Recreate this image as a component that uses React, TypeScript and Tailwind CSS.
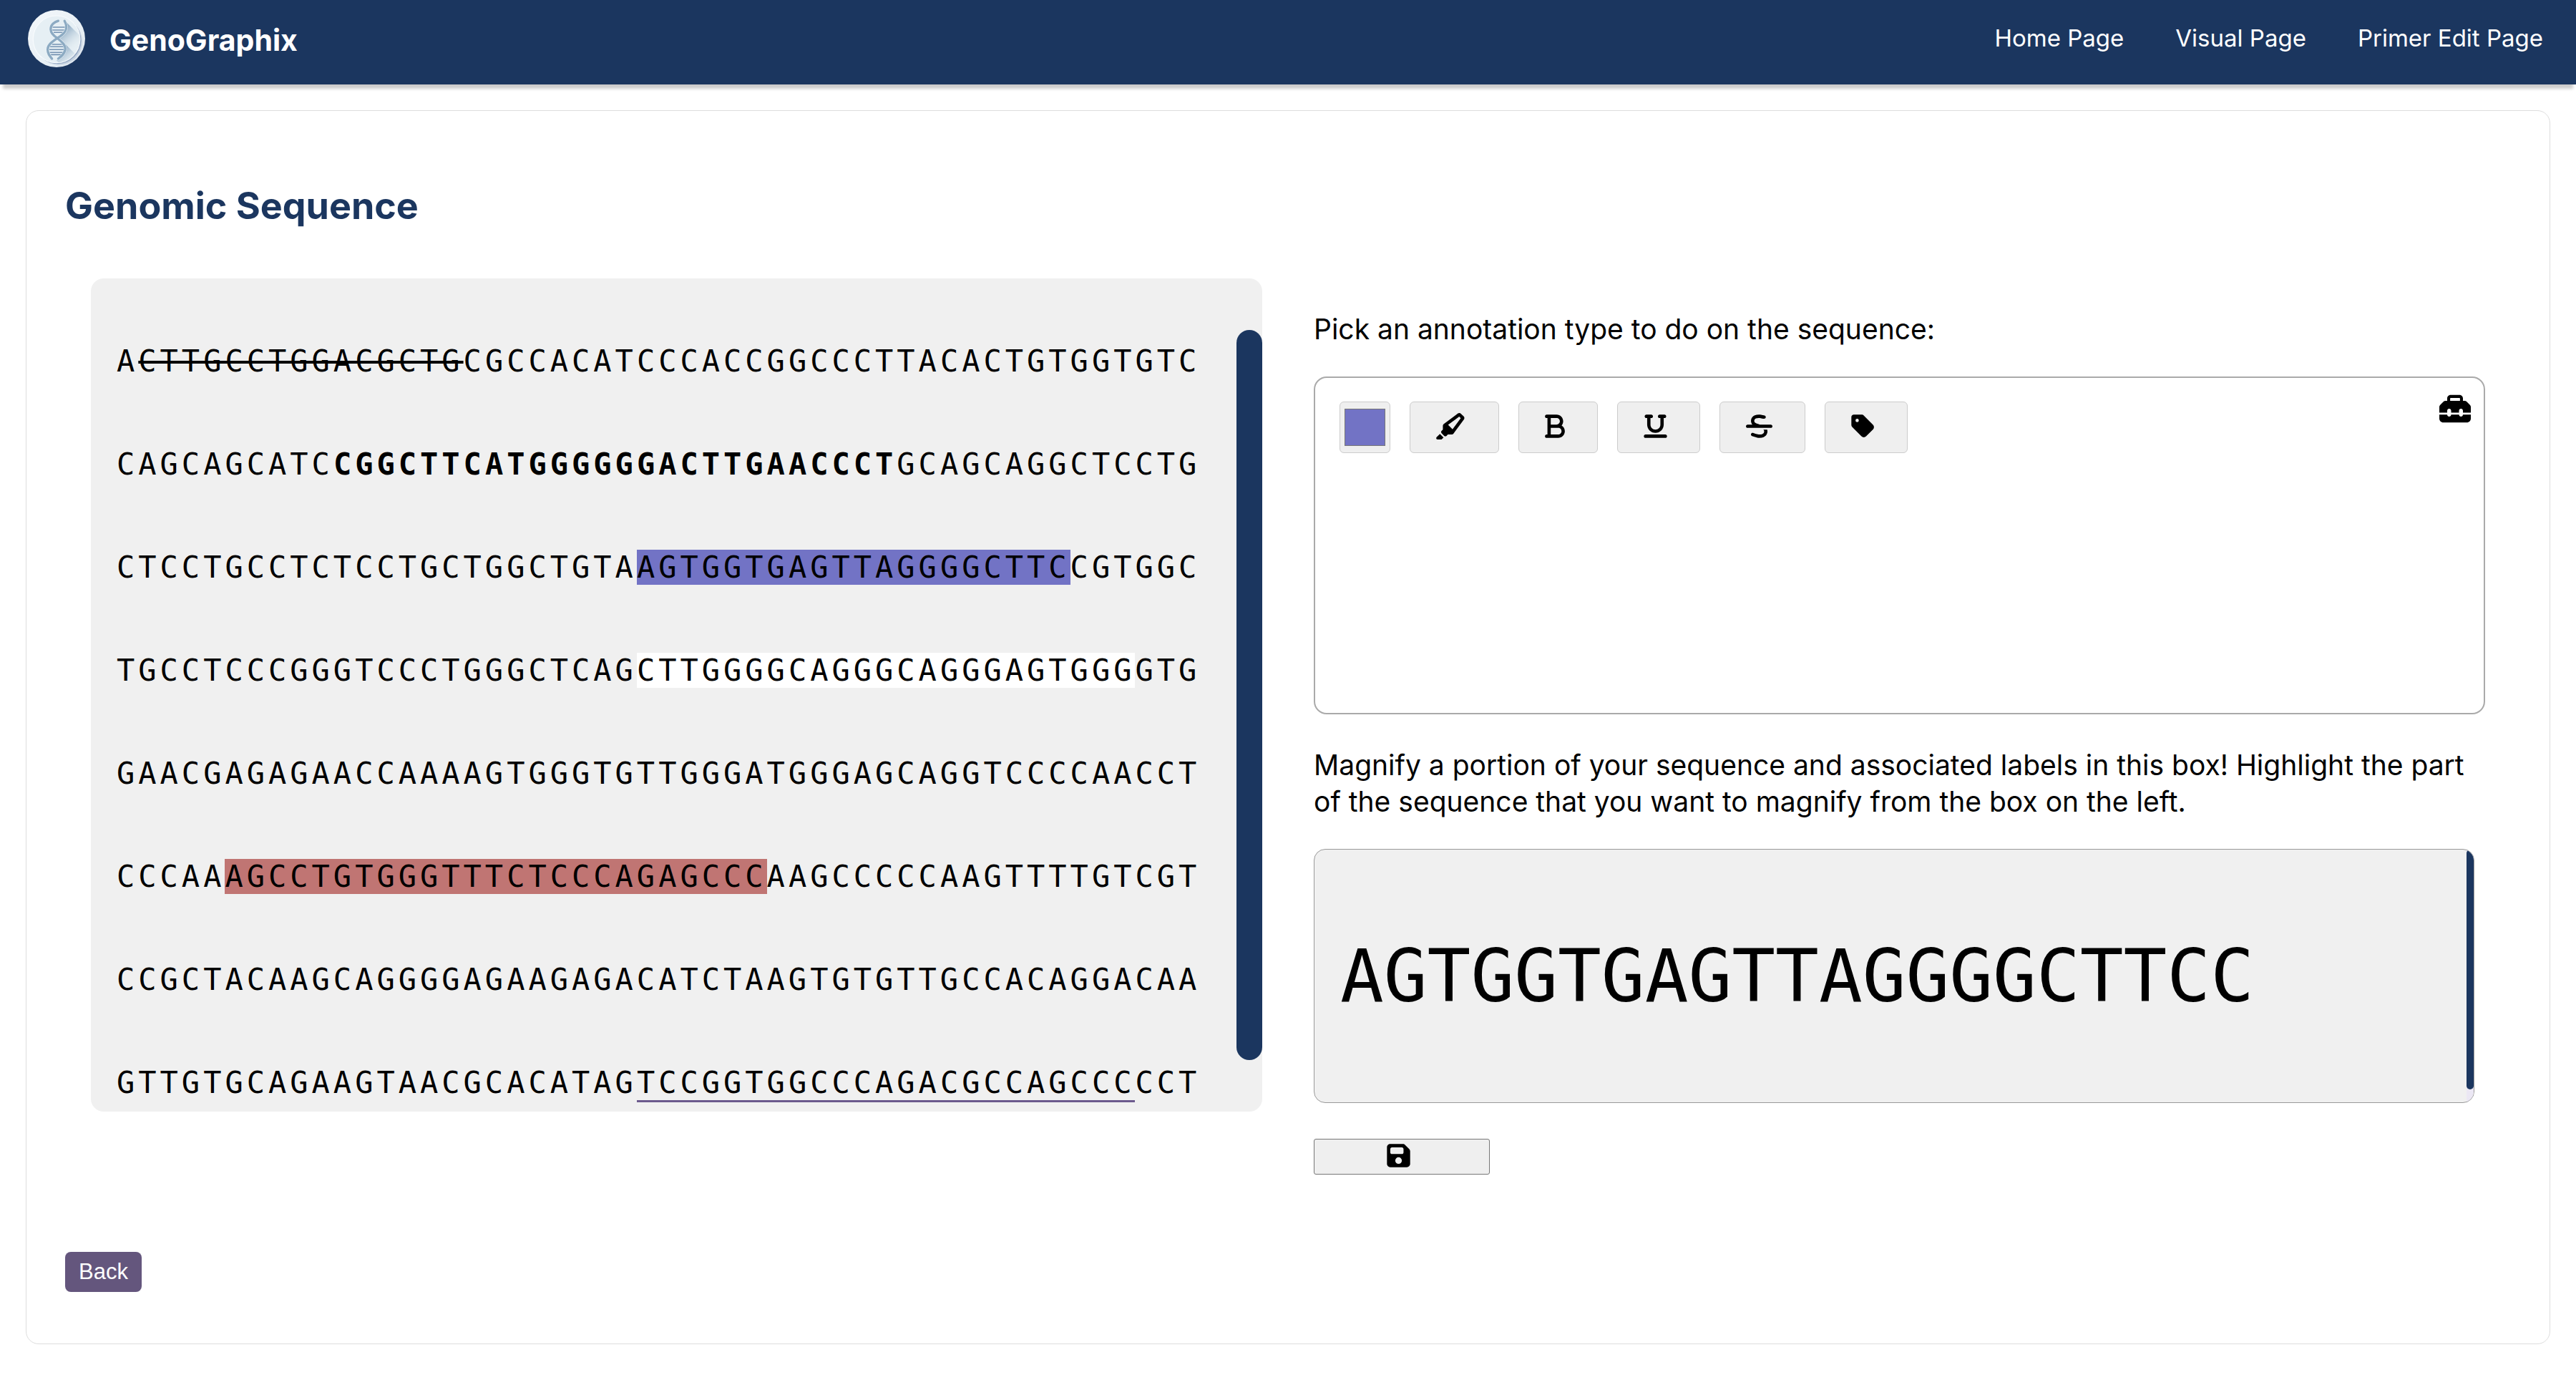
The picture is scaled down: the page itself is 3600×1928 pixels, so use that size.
import type { ReactNode } from "react";
import {
  FaBold,
  FaFloppyDisk,
  FaHighlighter,
  FaStrikethrough,
  FaTag,
  FaToolbox,
  FaUnderline,
} from "react-icons/fa6";

function Logo() {
  return (
    <svg viewBox="0 0 100 100" className="size-20 shrink-0" role="img" aria-label="GenoGraphix logo">
      <defs>
        <linearGradient id="disc" x1="0" y1="0" x2="1" y2="1">
          <stop offset="0" stopColor="#f4f8fb" />
          <stop offset="0.7" stopColor="#e6eef4" />
          <stop offset="1" stopColor="#d3dce8" />
        </linearGradient>
        <linearGradient id="cast" gradientUnits="userSpaceOnUse" x1="62" y1="30" x2="90" y2="62">
          <stop offset="0" stopColor="#7f9fbb" />
          <stop offset="1" stopColor="#e4edf2" stopOpacity="0" />
        </linearGradient>
        <linearGradient id="castLow" gradientUnits="userSpaceOnUse" x1="60" y1="64" x2="82" y2="90">
          <stop offset="0" stopColor="#7f9fbb" />
          <stop offset="1" stopColor="#d5e1ea" stopOpacity="0" />
        </linearGradient>
        <clipPath id="inner">
          <circle cx="50" cy="51" r="41" />
        </clipPath>
      </defs>
      <circle cx="50" cy="50" r="50" fill="url(#disc)" />
      <circle cx="54" cy="55" r="41" fill="#c6d2e0" />
      <circle cx="52" cy="53" r="41" fill="#93a8c4" />
      <circle cx="50" cy="51" r="41" fill="#e6eff4" stroke="#f8fbfd" strokeWidth="1.5" />
      <g clipPath="url(#inner)">
        <path d="M65 19L98 52V72L84 76L54 48L64 40Z" fill="url(#cast)" />
        <path d="M60 54L92 86L80 98H60L50 88L64 76Z" fill="url(#castLow)" />
      </g>
      <path
        d="M42 30H65M42 35H65M45 39H62M42 60H60M38 64H64M37 69H65M38 74H63M40 78H60"
        fill="none"
        stroke="#7492b1"
        strokeWidth="2"
      />
      <g fill="none" stroke="#eaf2f7" strokeWidth="5.5" strokeLinecap="round">
        <path d="M53 19C38 24 36 36 46 45C56 53 67 60 65 70C63 78 57 82 53 85" />
        <path d="M64 19C70 30 68 38 56 46C42 55 32 62 35 73C36 79 40 82 42 85" />
      </g>
      <g fill="none" stroke="#8caac2" strokeWidth="4.2" strokeLinecap="round">
        <path d="M53 19C38 24 36 36 46 45C56 53 67 60 65 70C63 78 57 82 53 85" />
        <path d="M64 19C70 30 68 38 56 46C42 55 32 62 35 73C36 79 40 82 42 85" />
      </g>
    </svg>
  );
}

function ToolButton({ label, children }: { label: string; children: ReactNode }) {
  return (
    <button
      type="button"
      aria-label={label}
      className="flex h-[72px] shrink-0 items-center rounded-md border border-[#cccccc] bg-[#efefef] pr-[45px] pb-1 pl-9 text-black"
    >
      {children}
    </button>
  );
}

const sequence: ReactNode[] = [
  <>A<s>CTTGCCTGGACGCTG</s>CGCCACATCCCACCGGCCCTTACACTGTGGTGTC</>,
  <>CAGCAGCATC<b className="font-bold">CGGCTTCATGGGGGGACTTGAACCCT</b>GCAGCAGGCTCCTG</>,
  <>CTCCTGCCTCTCCTGCTGGCTGTA<mark className="bg-[#7273c5] text-black">AGTGGTGAGTTAGGGGCTTC</mark>CGTGGC</>,
  <>TGCCTCCCGGGTCCCTGGGCTCAG<mark className="bg-white text-black">CTTGGGGCAGGGCAGGGAGTGGG</mark>GTG</>,
  <>GAACGAGAGAACCAAAAGTGGGTGTTGGGATGGGAGCAGGTCCCCAACCT</>,
  <>CCCAA<mark className="bg-[#c07573] text-black">AGCCTGTGGGTTTCTCCCAGAGCCC</mark>AAGCCCCCAAGTTTTGTCGT</>,
  <>CCGCTACAAGCAGGGGAGAAGAGACATCTAAGTGTGTTGCCACAGGACAA</>,
  <>GTTGTGCAGAAGTAACGCACATAG<span className="border-b-3 border-[#6c5a8d]">TCCGGTGGCCCAGACGCCAGCCC</span>CCT</>,
];

export default function App() {
  return (
    <div className="bg-white pb-[50px] font-['Inter',sans-serif] text-black">
      <header className="flex h-[118px] items-start justify-between bg-[#1b365f] pt-3.5 pr-[46px] pl-[39px] text-white shadow-[0_10px_4px_-4px_rgba(0,0,0,0.2)]">
        <div className="flex items-center gap-[34px]">
          <Logo />
          <span className="pt-1 text-[41px] leading-[50px] font-bold">GenoGraphix</span>
        </div>
        <nav className="flex gap-[72px] pt-4 text-[33px] leading-[46px]">
          <a href="#home">Home Page</a>
          <a href="#visual">Visual Page</a>
          <a href="#primer">Primer Edit Page</a>
        </nav>
      </header>

      <main className="mx-9 mt-9 rounded-[18px] border border-[#dddddd] px-[54px] pt-[100px] pb-[72px]">
        <h1 className="text-[52px] leading-[66px] font-bold text-[#1b365f]">Genomic Sequence</h1>

        <div className="mt-[68px] grid grid-cols-2 gap-[72px] px-9">
          <section
            aria-label="Sequence"
            className="flex h-[1164px] justify-between overflow-hidden rounded-[18px] bg-[#f0f0f0] pt-11 pl-9"
          >
            <div className="font-['DejaVu_Sans_Mono',monospace] text-[42px] leading-[144px] tracking-[5px] whitespace-nowrap">
              {sequence.map((line, i) => (
                <div key={i}>{line}</div>
              ))}
            </div>
            <div className="mt-7 h-[1020px] w-9 shrink-0 rounded-full bg-[#1b365f]" />
          </section>

          <section aria-label="Annotation tools" className="pt-[45px]">
            <p className="text-[39px] leading-[51px]">Pick an annotation type to do on the sequence:</p>

            <div className="mt-[41px] flex h-[472px] items-start justify-between rounded-[18px] border-2 border-[#aaaaaa] pr-[18px] pl-[34px]">
              <div className="mt-[33px] flex gap-[27px]">
                <input
                  type="color"
                  aria-label="Annotation colour"
                  defaultValue="#7273c5"
                  className="h-[72px] w-[71px] appearance-none rounded-md border border-[#cccccc] bg-[#efefef] px-1.5 py-[9px] [&::-webkit-color-swatch]:border [&::-webkit-color-swatch]:border-[#777777] [&::-webkit-color-swatch-wrapper]:p-0"
                />
                <ToolButton label="Highlight"><FaHighlighter className="h-[37px] w-[42px]" /></ToolButton>
                <ToolButton label="Bold"><FaBold className="h-[37px] w-7" /></ToolButton>
                <ToolButton label="Underline"><FaUnderline className="h-[37px] w-[33px]" /></ToolButton>
                <ToolButton label="Strikethrough"><FaStrikethrough className="h-[37px] w-[37px]" /></ToolButton>
                <ToolButton label="Label"><FaTag className="h-[37px] w-[33px]" /></ToolButton>
              </div>
              <button type="button" aria-label="Toolbox" className="mt-[21px]">
                <FaToolbox className="size-11" />
              </button>
            </div>

            <p className="mt-[45px] text-[39px] leading-[51px]">
              Magnify a portion of your sequence and associated labels in this box! Highlight the part of the sequence
              that you want to magnify from the box on the left.
            </p>

            <div className="mt-[41px] mr-[15px] flex h-[355px] justify-between overflow-hidden rounded-2xl border border-[#999999] bg-[#f0f0f0] pl-9">
              <div className="pt-[87px] font-['DejaVu_Sans_Mono',monospace] text-[101px] leading-[180px] whitespace-nowrap">
                AGTGGTGAGTTAGGGGCTTCC
              </div>
              <div className="w-2.5 shrink-0 bg-[#ebe7f4]">
                <div className="h-[335px] rounded-full bg-[#1b365f]" />
              </div>
            </div>

            <button
              type="button"
              aria-label="Save"
              className="mt-[50px] flex h-[50px] w-[246px] items-center justify-center rounded-[3px] border border-[#767676] bg-[#efefef] pr-2.5 pb-1"
            >
              <FaFloppyDisk className="h-[37px] w-[33px]" />
            </button>
          </section>
        </div>

        <button
          type="button"
          className="mt-[108px] flex h-14 items-center rounded-lg bg-[#64567d] px-[19px] font-['Liberation_Sans',sans-serif] text-[31px] text-white"
        >
          Back
        </button>
      </main>
    </div>
  );
}
